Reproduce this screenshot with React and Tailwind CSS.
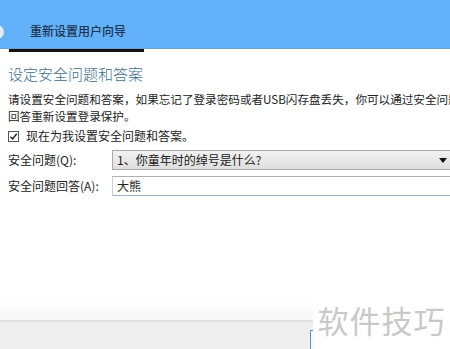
import React from 'react';

const cjk = { fontFamily: '"Noto Sans CJK SC", "Liberation Sans", sans-serif' };

const Row = ({ label, children }) => (
  <div className="flex items-center h-[20px]">
    <span className="w-[104px] text-[12px] text-[#222] leading-none">{label}</span>
    {children}
  </div>
);

export default function App() {
  return (
    <div className="relative w-[450px] h-[349px] overflow-hidden bg-white flex flex-col" style={cjk}>
      {/* header */}
      <div className="h-[49px] bg-[#63b1f8] border-b border-[#6f9ec6] flex items-center relative shrink-0">
        <div className="absolute -left-[10px] top-[25px] w-[14px] h-[14px] rounded-full bg-[#dcecfb]" />
        <span className="ml-[30px] mt-[13px] text-[12px] font-medium text-[#1d3550]">重新设置用户向导</span>
      </div>
      <div className="ml-[9px] w-[135px] h-[3px] bg-[#111] shrink-0" />

      {/* body */}
      <div className="px-2 w-[480px] flex flex-col shrink-0">
        <h2 className="mt-[12px] h-[20px] leading-[20px] text-[15px] font-light text-[#3e6f8e]">设定安全问题和答案</h2>
        <p className="mt-[7px] text-[11.6px] leading-[17px] text-[#222] whitespace-nowrap">
          请设置安全问题和答案，如果忘记了登录密码或者USB闪存盘丢失，你可以通过安全问题
          <br />
          回答重新设置登录保护。
        </p>
        <label className="mt-[3px] h-[16px] flex items-center gap-[7px] text-[12px] text-[#222]">
          <span className="w-[11px] h-[11px] border border-[#555] bg-white flex items-center justify-center">
            <svg viewBox="0 0 10 10" className="w-[9px] h-[9px]">
              <path d="M1.5 5.2 L4 7.6 L8.6 2" fill="none" stroke="#222" strokeWidth="1.6" />
            </svg>
          </span>
          现在为我设置安全问题和答案。
        </label>
        <div className="mt-[6px]">
          <Row label="安全问题(Q):">
            <div className="w-[345px] h-[20px] border border-[#a9a9a9] bg-gradient-to-b from-[#f2f2f2] to-[#dedede] flex items-center justify-between pl-[4px] pr-[9px]">
              <span className="text-[12px] text-[#222]">1、你童年时的绰号是什么?</span>
              <svg viewBox="0 0 8 5" className="w-[8px] h-[5px]">
                <path d="M0 0 H8 L4 5 Z" fill="#111" />
              </svg>
            </div>
          </Row>
        </div>
        <div className="mt-[6px]">
          <Row label="安全问题回答(A):">
            <div className="w-[345px] h-[20px] border border-[#c9d2da] border-t-[#aab0b6] border-b-[#9fb4c6] bg-white flex items-center pl-[4px]">
              <span className="text-[12px] text-[#222]">大熊</span>
            </div>
          </Row>
        </div>
      </div>

      <div className="flex-1 bg-gradient-to-b from-white from-80% to-[#f8f8f8]" />

      {/* footer */}
      <div className="h-[29px] shrink-0 bg-[#eeeeee] border-t-2 border-[#e2e2e2] pl-[310px] pt-[8px]">
        <div className="w-[100px] h-[30px] border border-[#5f8fbf] bg-[#f4f8fc]" />
      </div>

      {/* watermark */}
      <div className="absolute left-[313px] right-0 top-[298px] bottom-0 bg-white flex items-start justify-center pt-[4px]">
        <span className="text-[31px] leading-[36px] text-[#c8c8c8] tracking-[1px]">软件技巧</span>
      </div>
    </div>
  );
}
